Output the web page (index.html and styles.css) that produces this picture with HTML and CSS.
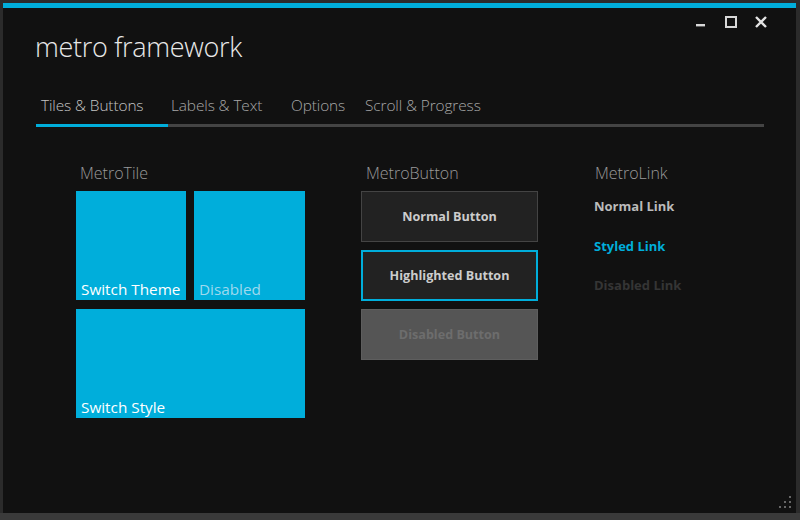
FILE: index.html
```html
<!DOCTYPE html>
<html>
<head>
<meta charset="utf-8">
<title>metro framework</title>
<link rel="stylesheet" href="styles.css">
</head>
<body>
<div class="window">
  <header class="header">
    <h1 class="title">metro framework</h1>
    <div class="controls">
      <svg class="ctl" width="12" height="12" viewBox="0 0 12 12"><rect x="1" y="8" width="9" height="2.4" fill="#d8d8d8"/></svg>
      <svg class="ctl" width="12" height="12" viewBox="0 0 12 12"><rect x="1" y="1" width="10" height="10" fill="none" stroke="#d8d8d8" stroke-width="2"/></svg>
      <svg class="ctl" width="12" height="12" viewBox="0 0 12 12"><path d="M1 1 L11 11 M11 1 L1 11" stroke="#e4e4e4" stroke-width="2.4"/></svg>
    </div>
  </header>

  <nav class="tabs">
    <div class="tab tab-1 active">Tiles &amp; Buttons</div>
    <div class="tab tab-2">Labels &amp; Text</div>
    <div class="tab tab-3">Options</div>
    <div class="tab tab-4">Scroll &amp; Progress</div>
  </nav>

  <main class="content">
    <section class="col col-tiles">
      <div class="label">MetroTile</div>
      <div class="tiles">
        <div class="tile">Switch Theme</div>
        <div class="tile disabled">Disabled</div>
        <div class="tile wide">Switch Style</div>
      </div>
    </section>
    <section class="col col-buttons">
      <div class="label">MetroButton</div>
      <div class="buttons">
        <div class="btn">Normal Button</div>
        <div class="btn highlight">Highlighted Button</div>
        <div class="btn disabled">Disabled Button</div>
      </div>
    </section>
    <section class="col col-links">
      <div class="label">MetroLink</div>
      <div class="links">
        <div class="link">Normal Link</div>
        <div class="link styled">Styled Link</div>
        <div class="link disabled">Disabled Link</div>
      </div>
    </section>
  </main>

  <svg class="grip" width="16" height="16" viewBox="0 0 16 16">
    <g fill="#666666">
      <rect x="12" y="1" width="2" height="2"/>
      <rect x="7" y="6" width="2" height="2"/><rect x="12" y="6" width="2" height="2"/>
      <rect x="2" y="11" width="2" height="2"/><rect x="7" y="11" width="2" height="2"/><rect x="12" y="11" width="2" height="2"/>
    </g>
  </svg>
</div>
<div class="taskbar"></div>
</body>
</html>
```

FILE: styles.css
```css
html, body {
  margin: 0;
  padding: 0;
}
body {
  width: 800px;
  height: 520px;
  overflow: hidden;
  background: #2b2b2b;
  font-family: "Open Sans", "Noto Sans", sans-serif;
}
.window {
  position: relative;
  box-sizing: border-box;
  margin: 3px 0 0 3px;
  width: 793px;
  height: 510px;
  border-top: 5px solid #00aedb;
  background: #111111;
}
.header {
  display: flex;
  justify-content: space-between;
  align-items: flex-start;
}
.title {
  margin: 22px 0 0 32px;
  font-size: 27px;
  line-height: 34px;
  font-weight: 300;
  color: #e8e8e8;
  letter-spacing: -0.3px;
}
.controls {
  display: flex;
  gap: 18px;
  margin: 8px 29px 0 0;
}
.ctl {
  display: block;
}
.tabs {
  display: flex;
  margin: 32px 0 0 33px;
  width: 728px;
  border-bottom: 3px solid #444444;
}
.tab {
  font-size: 15.4px;
  line-height: 20px;
  font-weight: 300;
  color: #a8a8a8;
  letter-spacing: -0.1px;
  padding-bottom: 8px;
  margin-bottom: -3px;
  border-bottom: 3px solid transparent;
  white-space: nowrap;
}
.tab.active {
  border-bottom-color: #00aedb;
  color: #c4c4c4;
}
.tab-1 { width: 127px; padding-left: 5px; }
.tab-2 { width: 114px; padding-left: 3px; }
.tab-3 { width: 69px; padding-left: 6px; }
.tab-4 { padding-left: 5px; }

.content {
  display: flex;
  padding: 37px 0 0 73px;
}
.col-tiles { width: 285px; }
.col-buttons { width: 233px; }
.label {
  font-size: 16px;
  line-height: 20px;
  font-weight: 300;
  color: #9a9a9a;
  padding-left: 4px;
  margin-top: -1px;
  margin-bottom: 8px;
}
.col-buttons .label { padding-left: 5px; }
.col-links .label { padding-left: 1px; }

.tiles {
  display: grid;
  grid-template-columns: 110px 111px;
  grid-template-rows: 109px 109px;
  column-gap: 8px;
  row-gap: 9px;
  width: 230px;
}
.tile {
  background: #00aedb;
  color: #ffffff;
  font-size: 15.3px;
  line-height: 18px;
  display: flex;
  align-items: flex-end;
  padding: 0 5px 2px;
}
.tile.disabled { color: #9ed9ee; }
.tile.wide { grid-column: 1 / 3; }

.buttons {
  display: flex;
  flex-direction: column;
  gap: 8px;
  width: 177px;
}
.btn {
  box-sizing: border-box;
  height: 51px;
  display: flex;
  align-items: center;
  justify-content: center;
  background: #222222;
  border: 1px solid #444444;
  color: #cccccc;
  font-weight: 700;
  font-size: 12.6px;
}
.btn.highlight {
  border: 2px solid #00aedb;
}
.btn.disabled {
  background: #555555;
  border-color: #5e5e5e;
  color: #6d6d6d;
}

.links {
  display: flex;
  flex-direction: column;
  gap: 19.5px;
  margin-top: 13px;
}
.link {
  font-size: 13px;
  font-weight: 700;
  line-height: 20px;
  color: #bbbbbb;
}
.link.styled { color: #00aedb; }
.link.disabled { color: #353535; }

.grip {
  position: absolute;
  right: 3px;
  bottom: 2px;
}
.taskbar {
  height: 7px;
  background: #3a3a3a;
}
```
